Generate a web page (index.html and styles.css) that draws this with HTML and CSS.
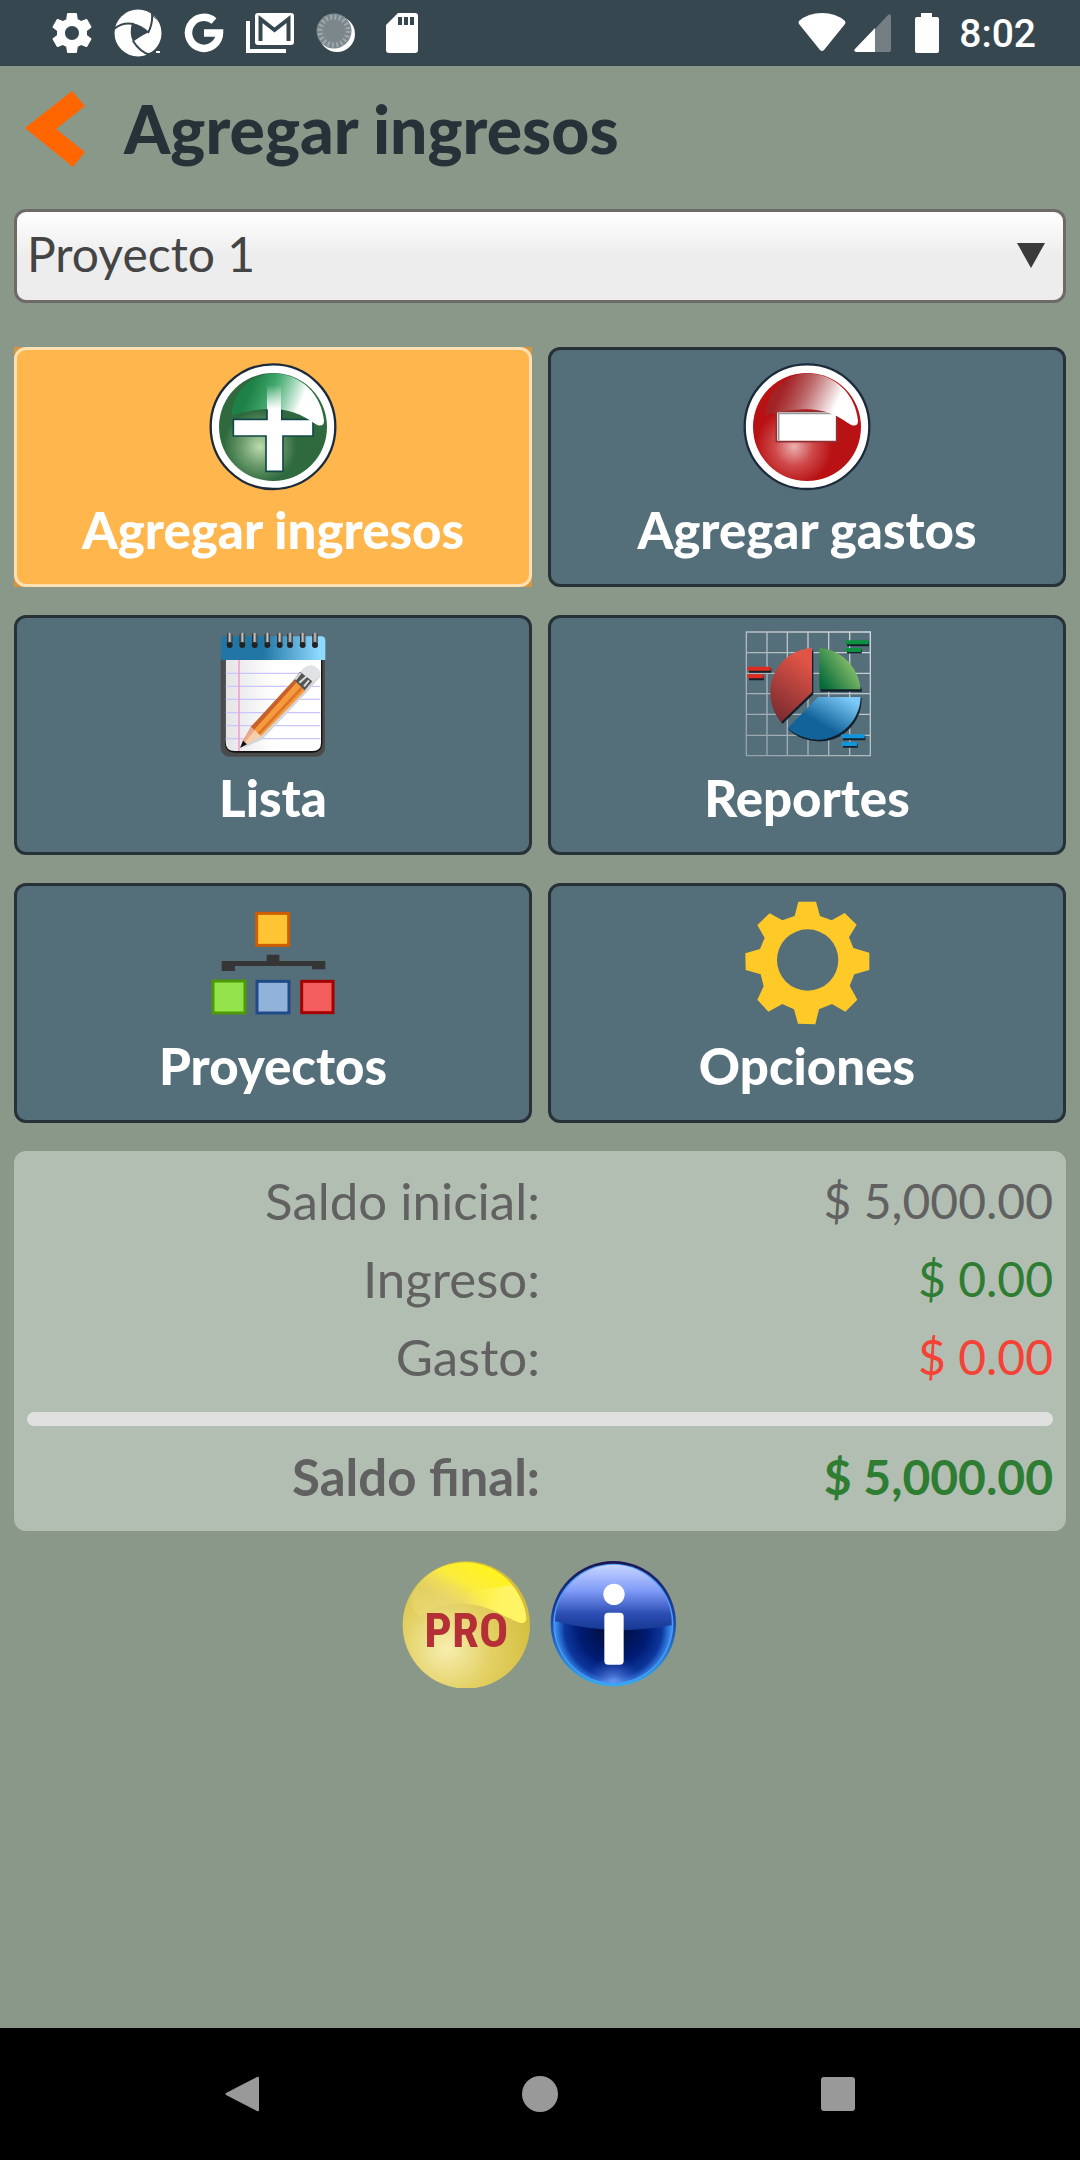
FILE: index.html
```html
<!DOCTYPE html>
<html lang="es">
<head>
<meta charset="utf-8">
<meta name="viewport" content="width=device-width, initial-scale=1">
<title>Agregar ingresos</title>
<link rel="stylesheet" href="styles.css">
</head>
<body>
<div class="status">
  <div class="status-left">
    <svg width="40" height="40" viewBox="2 2 20 20"><path fill="#fff" d="M19.43 12.98c.04-.32.07-.64.07-.98s-.03-.66-.07-.98l2.11-1.65c.19-.15.24-.42.12-.64l-2-3.46c-.12-.22-.39-.3-.61-.22l-2.49 1c-.52-.4-1.08-.73-1.69-.98l-.38-2.65C14.46 2.18 14.25 2 14 2h-4c-.25 0-.46.18-.49.42l-.38 2.65c-.61.25-1.17.59-1.69.98l-2.49-1c-.23-.09-.49 0-.61.22l-2 3.46c-.13.22-.07.49.12.64l2.11 1.65c-.04.32-.07.65-.07.98s.03.66.07.98l-2.11 1.65c-.19.15-.24.42-.12.64l2 3.46c.12.22.39.3.61.22l2.49-1c.52.4 1.08.73 1.69.98l.38 2.65c.03.24.24.42.49.42h4c.25 0 .46-.18.49-.42l.38-2.65c.61-.25 1.17-.59 1.69-.98l2.49 1c.23.09.49 0 .61-.22l2-3.46c.12-.22.07-.49-.12-.64l-2.11-1.65zM12 15.500c-1.930 0-3.500-1.570-3.500-3.500s1.570-3.500 3.500-3.500 3.500 1.570 3.500 3.500-1.570 3.500-3.500 3.500z"/></svg>
    <svg width="48" height="48" viewBox="0 0 48 48"><circle cx="24" cy="24" r="23.500" fill="#fff"/><path fill="#37474f" d="M18 14Q28 16 35 23Q25 28 19 33Q15 24 18 14z"/><path d="M0 20Q8 13 20 15M38 4Q39 15 34 24M48 33" fill="none" stroke="#37474f" stroke-width="2"/><path d="M19 32Q26 43 36 46" fill="none" stroke="#37474f" stroke-width="2"/><path d="M37 6L44 12L38 5z" fill="#37474f"/><path d="M32 45L34 48L48 48L48 42L41 42z" fill="#37474f"/><path d="M42 43h4" stroke="#fff" stroke-width="2"/></svg>
    <svg width="40" height="40" viewBox="0 0 40 40"><path d="M30 8A15.500 15.500 0 1 0 35.500 20H20" fill="none" stroke="#fff" stroke-width="7.500"/></svg>
    <svg width="48" height="40" viewBox="0 0 48 40"><path d="M2 8v30h38" fill="none" stroke="#fff" stroke-width="4"/><rect x="9" y="0" width="39" height="32" rx="3" fill="#fff"/><path d="M14.500 28V6L28.500 17L42.500 6V28" fill="none" stroke="#37474f" stroke-width="4"/></svg>
    <svg width="40" height="40" viewBox="0 0 40 40"><circle cx="21" cy="21" r="18" fill="#fff"/><circle cx="18" cy="18" r="17.500" fill="#7c878c"/><circle cx="18" cy="18" r="14" fill="none" stroke="#9fa8ac" stroke-width="5" stroke-dasharray="2 2.400"/></svg>
    <svg class="card" width="32" height="40" viewBox="0 0 32 40"><path fill="#fff" d="M12 0H29Q32 0 32 3V37Q32 40 29 40H3Q0 40 0 37V12z"/><path d="M14 4v8M20 4v8M26 4v8" stroke="#37474f" stroke-width="4"/></svg>
  </div>
  <div class="status-right">
    <svg width="48" height="40" viewBox="0 0 48 40"><path fill="#fff" d="M1 8Q10 0 24 0T47 8Q48 10 47 11L26 37Q24 39 22 37L1 11Q0 9 1 8z"/></svg>
    <svg class="signal" width="37" height="38" viewBox="0 0 37 38"><path fill="#737f85" d="M21 15L34 1Q37-1 37 3V36Q37 38 35 38H21z"/><path fill="#fff" d="M21 14V38H2Q-1 37 1 35z"/></svg>
    <svg class="battery" width="24" height="40" viewBox="0 0 24 40"><path fill="#fff" d="M6 0H17V4H22Q24 4 24 6V38Q24 40 22 40H2Q0 40 0 38V6Q0 4 2 4H6z"/></svg>
    <span class="clock">8:02</span>
  </div>
</div>

<header class="header">
  <button class="back" type="button" aria-label="Volver"><svg width="62" height="78" viewBox="0 0 62 78"><path fill="#f60" d="M48 1L61 16L32 39L61 62L49 77L1 38z"/></svg></button>
  <h1 class="title">Agregar ingresos</h1>
</header>

<main class="main">
  <div class="picker">
    <select class="select" aria-label="Proyecto"><option>Proyecto 1</option></select>
    <svg class="picker-arrow" width="28" height="25" viewBox="0 0 28 25"><path fill="#3a3a3a" d="M0 0H28L14 25z"/></svg>
  </div>

  <div class="tiles">
    <div class="cell cell-active"><button class="tile tile-active" type="button">
      <svg class="icon" viewBox="57 39 384 384">
        <defs>
          <radialGradient id="g1" gradientUnits="userSpaceOnUse" cx="210" cy="290" r="110"><stop offset="0" stop-color="#bcdcae"/><stop offset=".5" stop-color="#6d9d6e"/><stop offset="1" stop-color="#2f693e"/></radialGradient>
          <linearGradient id="g2" gradientUnits="userSpaceOnUse" x1="180" y1="120" x2="350" y2="190"><stop offset="0" stop-color="#15904a" stop-opacity=".65"/><stop offset=".35" stop-color="#4aba7c" stop-opacity=".8"/><stop offset=".85" stop-color="#fff"/></linearGradient>
          <linearGradient id="g3" x1="0" y1="0" x2="0" y2="1"><stop offset="0" stop-color="#fff" stop-opacity="0"/><stop offset="1" stop-color="#fff"/></linearGradient>
          <linearGradient id="g4" gradientUnits="userSpaceOnUse" x1="0" y1="115" x2="0" y2="180"><stop offset="0" stop-color="#2f9a5a"/><stop offset="1" stop-color="#fff"/></linearGradient>
        </defs>
        <circle cx="249" cy="230" r="187" fill="#fff" stroke="#1c2b3c" stroke-width="7"/>
        <circle cx="249" cy="231" r="162" fill="url(#g1)"/>
        <path fill="#fff" stroke="#12484a" stroke-width="5" d="M231 170H275V208H369V258H279V364H228V258H130V208H231z"/>
        <path fill="url(#g2)" d="M125 196A130 130 0 0 1 249 70C340 72 395 140 402 212Q402 230 384 226C360 215 330 180 249 177Q190 176 125 196z"/>
        <path fill="url(#g3)" d="M231 105H273V178H231z"/>
        <path fill="#fff" d="M234 176H273V210H234z"/>
      </svg>
      <span class="label">Agregar ingresos</span></button></div>
    <div class="cell"><button class="tile" type="button">
      <svg class="icon" viewBox="69 39 384 384">
        <defs>
          <radialGradient id="r1" gradientUnits="userSpaceOnUse" cx="222" cy="290" r="115"><stop offset="0" stop-color="#eab0b0"/><stop offset=".5" stop-color="#cf4a4b"/><stop offset="1" stop-color="#b81214"/></radialGradient>
          <linearGradient id="r2" gradientUnits="userSpaceOnUse" x1="190" y1="110" x2="350" y2="185"><stop offset="0" stop-color="#9a2b2d" stop-opacity=".7"/><stop offset=".4" stop-color="#bd7375" stop-opacity=".9"/><stop offset=".95" stop-color="#fff"/></linearGradient>
        </defs>
        <circle cx="261" cy="230" r="187" fill="#fff" stroke="#1c2b3c" stroke-width="7"/>
        <circle cx="261" cy="231" r="162" fill="url(#r1)"/>
        <path fill="#fff" stroke="#8f3033" stroke-width="5" d="M169 184H350V275H169z"/>
        <path d="M176 272V190H345" fill="none" stroke="#999" stroke-width="5"/>
        <path fill="url(#r2)" d="M137 196A130 130 0 0 1 261 70C352 72 407 140 414 212Q414 230 396 226C372 215 342 180 261 178Q202 177 137 196z"/>
      </svg>
      <span class="label">Agregar gastos</span></button></div>
    <div class="cell"><button class="tile" type="button">
      <svg class="icon" viewBox="57 48 384 384">
        <defs>
          <linearGradient id="n1"><stop offset=".4" stop-color="#2176a5"/><stop offset=".95" stop-color="#8fdaff"/></linearGradient>
          <linearGradient id="n2"><stop offset="0" stop-color="#e4e4e8"/><stop offset=".5" stop-color="#fff"/></linearGradient>
          <linearGradient id="n3" x1="0" y1="0" x2="1" y2="0"><stop offset="0" stop-color="#111"/><stop offset=".5" stop-color="#ccc"/><stop offset="1" stop-color="#222"/></linearGradient>
        </defs>
        <path d="M92 130H405V395Q405 425 375 425H122Q92 425 92 395z" fill="#4b4b4b"/>
        <path d="M105 130H397V384Q397 413 368 413H134Q105 413 105 384z" fill="#111"/>
        <path d="M107 130H393V384Q393 408 368 408H134Q107 408 107 380z" fill="url(#n2)"/>
        <path d="M107 175H391M107 214H391M107 253H391M107 293H391M107 332H391M107 371H391" stroke="#c8c5ff" stroke-width="4"/>
        <path d="M147 135V408" stroke="#f5a0d0" stroke-width="5"/>
        <path d="M93 135V77Q93 64 106 64H393Q406 64 406 77V135z" fill="url(#n1)"/>
        <g fill="url(#n3)"><rect x="111" y="53" width="16" height="38" rx="7"/><rect x="149" y="53" width="16" height="38" rx="7"/><rect x="186" y="53" width="16" height="38" rx="7"/><rect x="224" y="53" width="16" height="38" rx="7"/><rect x="261" y="53" width="16" height="38" rx="7"/><rect x="292" y="53" width="16" height="38" rx="7"/><rect x="330" y="53" width="16" height="38" rx="7"/><rect x="367" y="53" width="16" height="38" rx="7"/></g>
        <g fill="#222"><circle cx="119" cy="90" r="9"/><circle cx="157" cy="90" r="9"/><circle cx="194" cy="90" r="9"/><circle cx="232" cy="90" r="9"/><circle cx="269" cy="90" r="9"/><circle cx="300" cy="90" r="9"/><circle cx="338" cy="90" r="9"/><circle cx="375" cy="90" r="9"/></g>
        <path d="M160 399L216 374L352 230L392 183L380 165z" fill="#d5d5d5"/>
        <path d="M328 175L340 159Q366 140 388 166Q394 176 384 188L367 203z" fill="#dfe3e5"/>
        <path d="M310 197L330 170L367 199L343 227z" fill="#555"/>
        <path d="M316 194L332 174M328 203L350 184M342 214L357 196" stroke="#ddd" stroke-width="6"/>
        <path d="M312 195L345 227L213 363L182 336z" fill="#f79a3c"/>
        <path d="M312 195L319 203L192 345L182 336z" fill="#c6602c"/>
        <path d="M332 216L338 222L209 359L203 354z" fill="#d9762c"/>
        <path d="M182 336L213 363L170 388L156 380z" fill="#f8cda9"/>
        <path d="M182 336L194 346L162 385L156 380z" fill="#e9a98a"/>
        <path d="M159 377L171 388L150 399z" fill="#111"/>
      </svg>
      <span class="label">Lista</span></button></div>
    <div class="cell"><button class="tile" type="button">
      <svg class="icon" viewBox="69 48 384 384">
        <defs>
          <linearGradient id="p1" x1=".7" y1="0" x2=".3" y2="1"><stop offset=".1" stop-color="#e05446"/><stop offset="1" stop-color="#7a2b31"/></linearGradient>
          <linearGradient id="p2" x1="0" y1="1" x2="1" y2=".3"><stop offset=".1" stop-color="#056a37"/><stop offset="1" stop-color="#a2d077"/></linearGradient>
          <linearGradient id="p3" x1=".2" y1=".8" x2=".9" y2=".1"><stop offset=".3" stop-color="#12639a"/><stop offset="1" stop-color="#7ccaf8"/></linearGradient>
          <linearGradient id="p4" gradientUnits="userSpaceOnUse" x1="78" y1="424" x2="452" y2="51"><stop offset="0" stop-color="#93a1a8"/><stop offset="1" stop-color="#d3d9dc"/></linearGradient>
        </defs>
        <path d="M79 51V423M141 51V423M202 51V423M264 51V423M326 51V423M389 51V423M451 51V423M77 51H453M77 113H453M77 175H453M77 236H453M77 298H453M77 361H453M77 422H453" stroke="url(#p4)" stroke-width="4" fill="none"/>
        <g fill="#111f2a"><path d="M280 102V238L188 326L182 320z"/><path d="M301 103V230H425V220z"/><path d="M205 343C245 385 320 390 366 360Q425 320 425 247z"/></g>
        <path fill="url(#p1)" d="M276 98V232L183 322C145 275 137 205 180 148Q217 103 276 98z"/>
        <path fill="url(#p2)" d="M298 98Q352 103 388 143Q418 178 422 223H298z"/>
        <path fill="url(#p3)" d="M294 246H422C420 315 365 373 293 374Q240 372 203 340z"/>
        <g stroke="#16202a" stroke-width="13"><path d="M87 167H154M87 189H132M381 87H447M381 109H425M369 369H436M369 392H413"/></g>
        <g stroke-width="12"><path stroke="#e12a20" d="M83 161H152M83 184H131"/><path stroke="#0b9140" d="M377 82H446M377 105H423"/><path stroke="#1094dc" d="M365 364H434M365 387H411"/></g>
      </svg>
      <span class="label">Reportes</span></button></div>
    <div class="cell"><button class="tile" type="button">
      <svg class="icon" viewBox="57 42 384 384">
        <rect x="200" y="85" width="96" height="96" fill="#ffc433" stroke="#ce5c00" stroke-width="9"/>
        <path fill="#353535" d="M95 228H230V209H268V228H406V253H366V243H135V258H95z"/>
        <rect x="69" y="288" width="96" height="96" fill="#94e34a" stroke="#4c9a06" stroke-width="9"/>
        <rect x="201" y="289" width="96" height="95" fill="#91b3da" stroke="#204a87" stroke-width="9"/>
        <rect x="335" y="289" width="94" height="94" fill="#f55e5e" stroke="#a40000" stroke-width="9"/>
      </svg>
      <span class="label">Proyectos</span></button></div>
    <div class="cell"><button class="tile" type="button">
      <svg class="icon" viewBox="69 42 384 384"><path fill="#ffca28" fill-rule="evenodd" d="M235 50L288 50L300 93L335 106L374 84L410 119L387 157L400 189L448 203L448 255L403 268L389 302L412 344L376 380L336 357L297 373L286 418L234 416L222 373L187 357L145 380L112 344L131 304L122 268L77 255L76 205L120 192L134 159L112 120L149 85L187 106L224 93zM263 133A92 92 0 1 0 263 317A92 92 0 1 0 263 133z"/></svg>
      <span class="label">Opciones</span></button></div>
  </div>

  <section class="summary">
    <table class="totals">
      <tbody>
        <tr><th scope="row">Saldo inicial:</th><td>$ 5,000.00</td></tr>
        <tr><th scope="row">Ingreso:</th><td class="income">$ 0.00</td></tr>
        <tr><th scope="row">Gasto:</th><td class="expense">$ 0.00</td></tr>
      </tbody>
    </table>
    <hr class="rule">
    <table class="totals totals-final">
      <tbody><tr><th scope="row">Saldo final:</th><td class="income">$ 5,000.00</td></tr></tbody>
    </table>
  </section>

  <div class="extras">
    <button class="round" type="button" aria-label="Versión PRO">
      <svg class="icon" viewBox="66 60 384 384">
        <defs>
          <radialGradient id="y1" gradientUnits="userSpaceOnUse" cx="200" cy="325" r="270"><stop offset="0" stop-color="#f7eeb0"/><stop offset=".5" stop-color="#e3d165"/><stop offset="1" stop-color="#d4bd3c"/></radialGradient>
          <linearGradient id="y2" gradientUnits="userSpaceOnUse" x1="310" y1="80" x2="240" y2="205"><stop offset="0" stop-color="#fff320"/><stop offset=".5" stop-color="#fff03c" stop-opacity=".9"/><stop offset="1" stop-color="#f0e080" stop-opacity=".35"/></linearGradient>
          <linearGradient id="y3" gradientUnits="userSpaceOnUse" x1="250" y1="180" x2="430" y2="220"><stop offset="0" stop-color="#fff34a" stop-opacity="0"/><stop offset=".6" stop-color="#fff564"/></linearGradient>
        </defs>
        <circle cx="259" cy="255" r="191" fill="url(#y1)"/>
        <path fill="url(#y2)" d="M96 165C130 95 195 68 259 67C360 70 430 150 439 235Q438 252 420 248C360 225 330 195 250 191Q160 192 118 230Q90 200 96 165z"/>
        <path fill="url(#y3)" d="M250 191C330 195 360 225 420 248Q438 252 439 235C436 200 420 165 395 135L250 160z"/>
        <text class="pro" x="259" y="320" text-anchor="middle">PRO</text>
      </svg>
    </button>
    <button class="round" type="button" aria-label="Información">
      <svg class="icon" viewBox="510 60 384 384">
        <defs>
          <linearGradient id="b1" x1="0" y1="0" x2="0" y2="1"><stop offset="0" stop-color="#1b1450"/><stop offset=".45" stop-color="#1e45a8"/><stop offset="1" stop-color="#35aaf0"/></linearGradient>
          <radialGradient id="b2" gradientUnits="userSpaceOnUse" cx="700" cy="265" r="172"><stop offset="0" stop-color="#000a2e"/><stop offset=".6" stop-color="#001c74"/><stop offset=".85" stop-color="#0d379c"/><stop offset="1" stop-color="#3989ee"/></radialGradient>
          <linearGradient id="b3" x1="0" y1="0" x2="0" y2="1"><stop offset="0" stop-color="#c8d6ff"/><stop offset=".4" stop-color="#809bf8"/><stop offset=".75" stop-color="#2c4db4"/><stop offset="1" stop-color="#153992"/></linearGradient>
          <radialGradient id="b4" gradientUnits="userSpaceOnUse" cx="700" cy="435" r="85"><stop offset="0" stop-color="#78a5ff"/><stop offset="1" stop-color="#3058c8" stop-opacity="0"/></radialGradient>
        </defs>
        <circle cx="700" cy="251" r="188" fill="url(#b1)"/>
        <circle cx="700" cy="251" r="180" fill="#4d9ff5"/>
        <circle cx="700" cy="252" r="176" fill="url(#b2)"/>
        <circle cx="700" cy="252" r="176" fill="url(#b4)"/>
        <path fill="url(#b3)" d="M525 244A175 176 0 0 1 875 256Q700 290 525 244z"/>
        <circle cx="702" cy="163" r="32" fill="#fff"/>
        <rect x="673" y="218" width="58" height="156" rx="12" fill="#fff"/>
      </svg>
    </button>
  </div>
</main>

<nav class="nav">
  <button class="nav-btn" type="button" aria-label="Atrás"><svg width="36" height="36" viewBox="0 0 36 36"><path fill="#999" d="M33 1Q35 0 35 2V34Q35 36 33 35L2 19Q1 18 2 17z"/></svg></button>
  <button class="nav-btn" type="button" aria-label="Inicio"><svg width="36" height="36" viewBox="0 0 36 36"><circle cx="18" cy="18" r="18" fill="#999"/></svg></button>
  <button class="nav-btn" type="button" aria-label="Recientes"><svg width="36" height="36" viewBox="0 0 36 36"><rect x="1" y="1" width="34" height="34" rx="3" fill="#999"/></svg></button>
</nav>
</body>
</html>
```
FILE: styles.css
```css
* { box-sizing: border-box; }
body {
  margin: 0;
  min-height: 100vh;
  display: flex;
  flex-direction: column;
  background: #8a988a;
  color: #263238;
  font-family: Lato, "Noto Sans", sans-serif;
}
svg { display: block; flex: none; }
button { font: inherit; cursor: pointer; }

.status {
  display: flex;
  justify-content: space-between;
  height: 66px;
  padding: 0 44px 0 52px;
  background: #37474f;
}
.status-left, .status-right { display: flex; align-items: center; }
.status-left { gap: 22px; }
.card { margin-left: 8px; }
.signal { margin-left: 8px; }
.battery { margin-left: 24px; }
.clock {
  margin-left: 20px;
  padding-top: 2px;
  color: #fff;
  font: 500 39px/48px Roboto, sans-serif;
}

.header {
  display: flex;
  align-items: center;
  gap: 38px;
  height: 125px;
  padding: 0 24px;
}
.back { padding: 0; border: 0; background: none; }
.title { margin: 0; font-size: 66px; line-height: 80px; font-weight: 900; }

.main { flex: 1; padding: 18px 14px; }

.picker { position: relative; margin-bottom: 44px; }
.select {
  display: block;
  appearance: none;
  width: 100%;
  height: 94px;
  padding: 0 64px 4px 10px;
  border: 3px solid #6e6a6a;
  border-radius: 12px;
  background: linear-gradient(#fff, #ededed 50%);
  color: #444;
  font: 400 48px/78px Lato, "Noto Sans", sans-serif;
}
.picker-arrow { position: absolute; right: 21px; top: 34px; pointer-events: none; }

.tiles {
  display: grid;
  grid-template-columns: 1fr 1fr;
  gap: 28px 16px;
}
.cell-active { background: #d6963f; }
.tile {
  display: flex;
  flex-direction: column;
  align-items: center;
  width: 100%;
  padding: 13px 8px 15px;
  border: 3px solid #263238;
  border-radius: 12px;
  background: #546e7a;
  color: #fff;
}
.tile-active { border-color: #ffe0b2; background: #ffb74d; }
.icon { width: 128px; height: 128px; }
.label { font-size: 51px; line-height: 78px; font-weight: 900; }

.summary {
  margin-top: 28px;
  padding: 11px 13px 15px;
  border-radius: 12px;
  background: #b3beb3;
}
.totals {
  width: 100%;
  table-layout: fixed;
  border-collapse: collapse;
  color: #616161;
  line-height: 78px;
}
.totals th, .totals td { padding: 0; height: 78px; font-weight: 400; text-align: right; vertical-align: middle; }
.totals th { font-size: 51px; }
.totals td { font-size: 48px; }
.totals-final th, .totals-final td { font-weight: 700; }
.totals .income { color: #2e7d32; }
.totals .expense { color: #f44336; }
.rule { height: 14px; margin: 16px 0 12px; border: 0; border-radius: 7px; background: #e0e0e0; }

.extras {
  display: flex;
  justify-content: center;
  gap: 20px;
  margin-top: 29px;
}
.round { padding: 0; border: 0; background: none; }
.pro { fill: #b53036; font: 700 146px "Liberation Sans Narrow", "Roboto Condensed", "Liberation Sans", sans-serif; }

.nav {
  display: flex;
  justify-content: center;
  height: 132px;
  background: #000;
}
.nav-btn {
  display: flex;
  flex: 0 1 298px;
  align-items: center;
  justify-content: center;
  padding: 0;
  border: 0;
  background: none;
}
```
